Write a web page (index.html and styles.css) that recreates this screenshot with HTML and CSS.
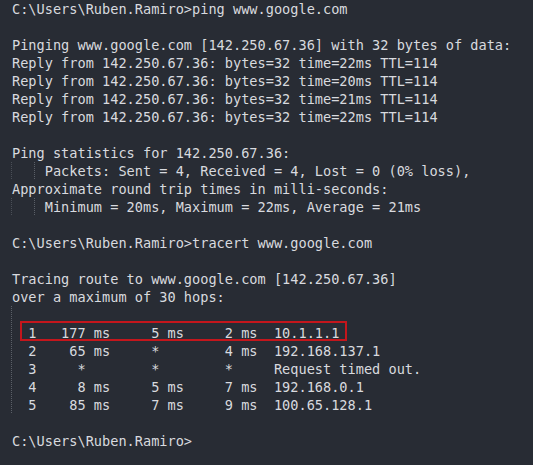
FILE: index.html
```html
<!DOCTYPE html>
<html>
<head>
<meta charset="utf-8">
<link rel="stylesheet" href="styles.css">
</head>
<body>
<div class="term">
<div class="ln">C:\Users\Ruben.Ramiro&gt;ping www.google.com</div>
<div class="ln"> </div>
<div class="ln">Pinging www.google.com [142.250.67.36] with 32 bytes of data:</div>
<div class="ln">Reply from 142.250.67.36: bytes=32 time=22ms TTL=114</div>
<div class="ln">Reply from 142.250.67.36: bytes=32 time=20ms TTL=114</div>
<div class="ln">Reply from 142.250.67.36: bytes=32 time=21ms TTL=114</div>
<div class="ln">Reply from 142.250.67.36: bytes=32 time=22ms TTL=114</div>
<div class="ln"> </div>
<div class="ln">Ping statistics for 142.250.67.36:</div>
<div class="ln g2">    Packets: Sent = 4, Received = 4, Lost = 0 (0% loss),</div>
<div class="ln">Approximate round trip times in milli-seconds:</div>
<div class="ln g2">    Minimum = 20ms, Maximum = 22ms, Average = 21ms</div>
<div class="ln"> </div>
<div class="ln">C:\Users\Ruben.Ramiro&gt;tracert www.google.com</div>
<div class="ln"> </div>
<div class="ln">Tracing route to www.google.com [142.250.67.36]</div>
<div class="ln">over a maximum of 30 hops:</div>
<div class="guide">
<div class="ln"> </div>
<div class="ln hl">  1   177 ms     5 ms     2 ms  10.1.1.1</div>
<div class="ln">  2    65 ms     *        4 ms  192.168.137.1</div>
<div class="ln">  3     *        *        *     Request timed out.</div>
<div class="ln">  4     8 ms     5 ms     7 ms  192.168.0.1</div>
<div class="ln">  5    85 ms     7 ms     9 ms  100.65.128.1</div>
</div>
<div class="ln"> </div>
<div class="ln">C:\Users\Ruben.Ramiro&gt;</div>
</div>
</body>
</html>
```

FILE: styles.css
```css
html, body {
  margin: 0;
  padding: 0;
  background: #282c34;
  width: 533px;
  height: 465px;
  overflow: hidden;
}
.term {
  padding: 0 0 0 12px;
  font-family: "DejaVu Sans Mono", "Liberation Mono", monospace;
  font-size: 13.6px;
  line-height: 18px;
  color: #d8dadf;
}
.ln {
  white-space: pre;
  height: 18px;
}
.guide {
  margin-left: -1px;
  padding-left: 1px;
  background-image: repeating-linear-gradient(to bottom, #5b6068 0 1px, transparent 1px 2px);
  background-size: 1px 100%;
  background-repeat: no-repeat;
  background-position: 0 0;
}
.g2 {
  margin-left: -1px;
  padding-left: 1px;
  background-image:
    repeating-linear-gradient(to bottom, #4a4f57 0 1px, transparent 1px 2px),
    repeating-linear-gradient(to bottom, #5b6068 0 1px, transparent 1px 2px);
  background-size: 1px 100%, 1px 100%;
  background-repeat: no-repeat;
  background-position: 0 0, 23px 0;
}
.hl {
  position: relative;
}
.hl::after {
  content: "";
  position: absolute;
  left: 8px;
  top: -3px;
  width: 327px;
  height: 20px;
  box-sizing: border-box;
  border: 2px solid #c4161c;
}
```
